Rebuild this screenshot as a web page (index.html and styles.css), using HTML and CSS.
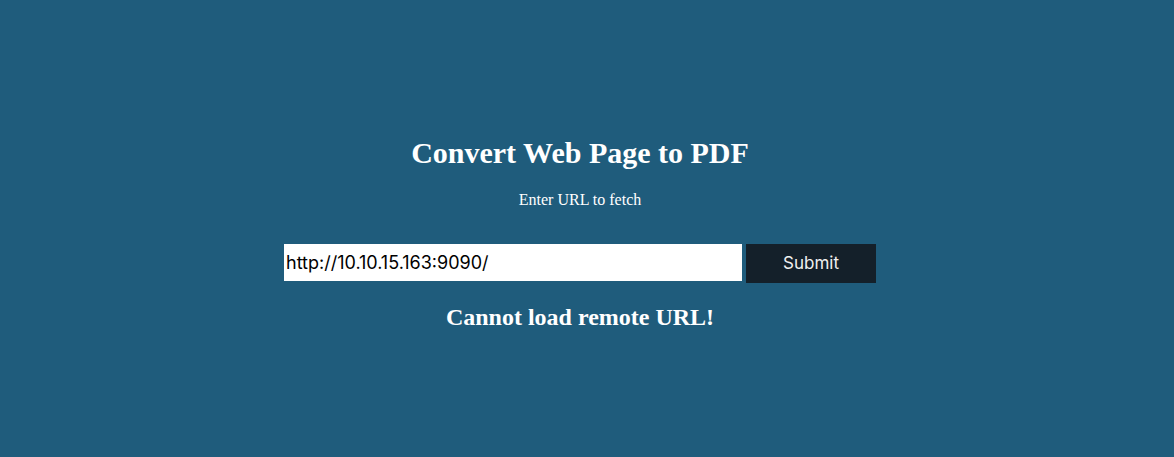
FILE: index.html
```html
<!DOCTYPE html>
<html lang="en">
<head>
<meta charset="utf-8">
<title>Convert Web Page to PDF</title>
<link rel="stylesheet" href="styles.css">
</head>
<body>
  <main class="page">
    <h1 class="title">Convert Web Page to PDF</h1>
    <p class="subtitle">Enter URL to fetch</p>
    <form class="fetch-form">
      <input class="url-input" type="text" name="url" value="http://10.10.15.163:9090/">
      <button class="submit-btn" type="button">Submit</button>
    </form>
    <h2 class="error">Cannot load remote URL!</h2>
  </main>
</body>
</html>
```
FILE: styles.css
```css
html, body {
  margin: 0;
  height: 100%;
}

body {
  background: #1f5c7c;
  color: #ffffff;
  font-family: "Liberation Serif", "Times New Roman", serif;
}

.page {
  display: flex;
  flex-direction: column;
  align-items: center;
  padding: 135px 14px 0 0;
}

.title {
  margin: 0;
  font-size: 30px;
  font-weight: bold;
  line-height: 35px;
}

.subtitle {
  margin: 21px 0 0;
  font-size: 16px;
  line-height: 18px;
}

.fetch-form {
  display: flex;
  align-items: flex-start;
  gap: 4px;
  margin-top: 35px;
}

.url-input {
  box-sizing: border-box;
  width: 458px;
  height: 37px;
  margin: 0;
  padding: 0 2px;
  border: none;
  background: #ffffff;
  color: #000000;
  font-family: Inter, "Liberation Sans", sans-serif;
  font-size: 18px;
  outline: none;
}

.submit-btn {
  box-sizing: border-box;
  width: 130px;
  height: 39px;
  margin: 0;
  padding: 0 0 2px;
  border: none;
  background: #14202a;
  color: #f0f0f0;
  font-family: Inter, "Liberation Sans", sans-serif;
  font-size: 17px;
}

.error {
  margin: 20px 0 0;
  font-size: 24px;
  font-weight: bold;
  line-height: 28px;
}
```
